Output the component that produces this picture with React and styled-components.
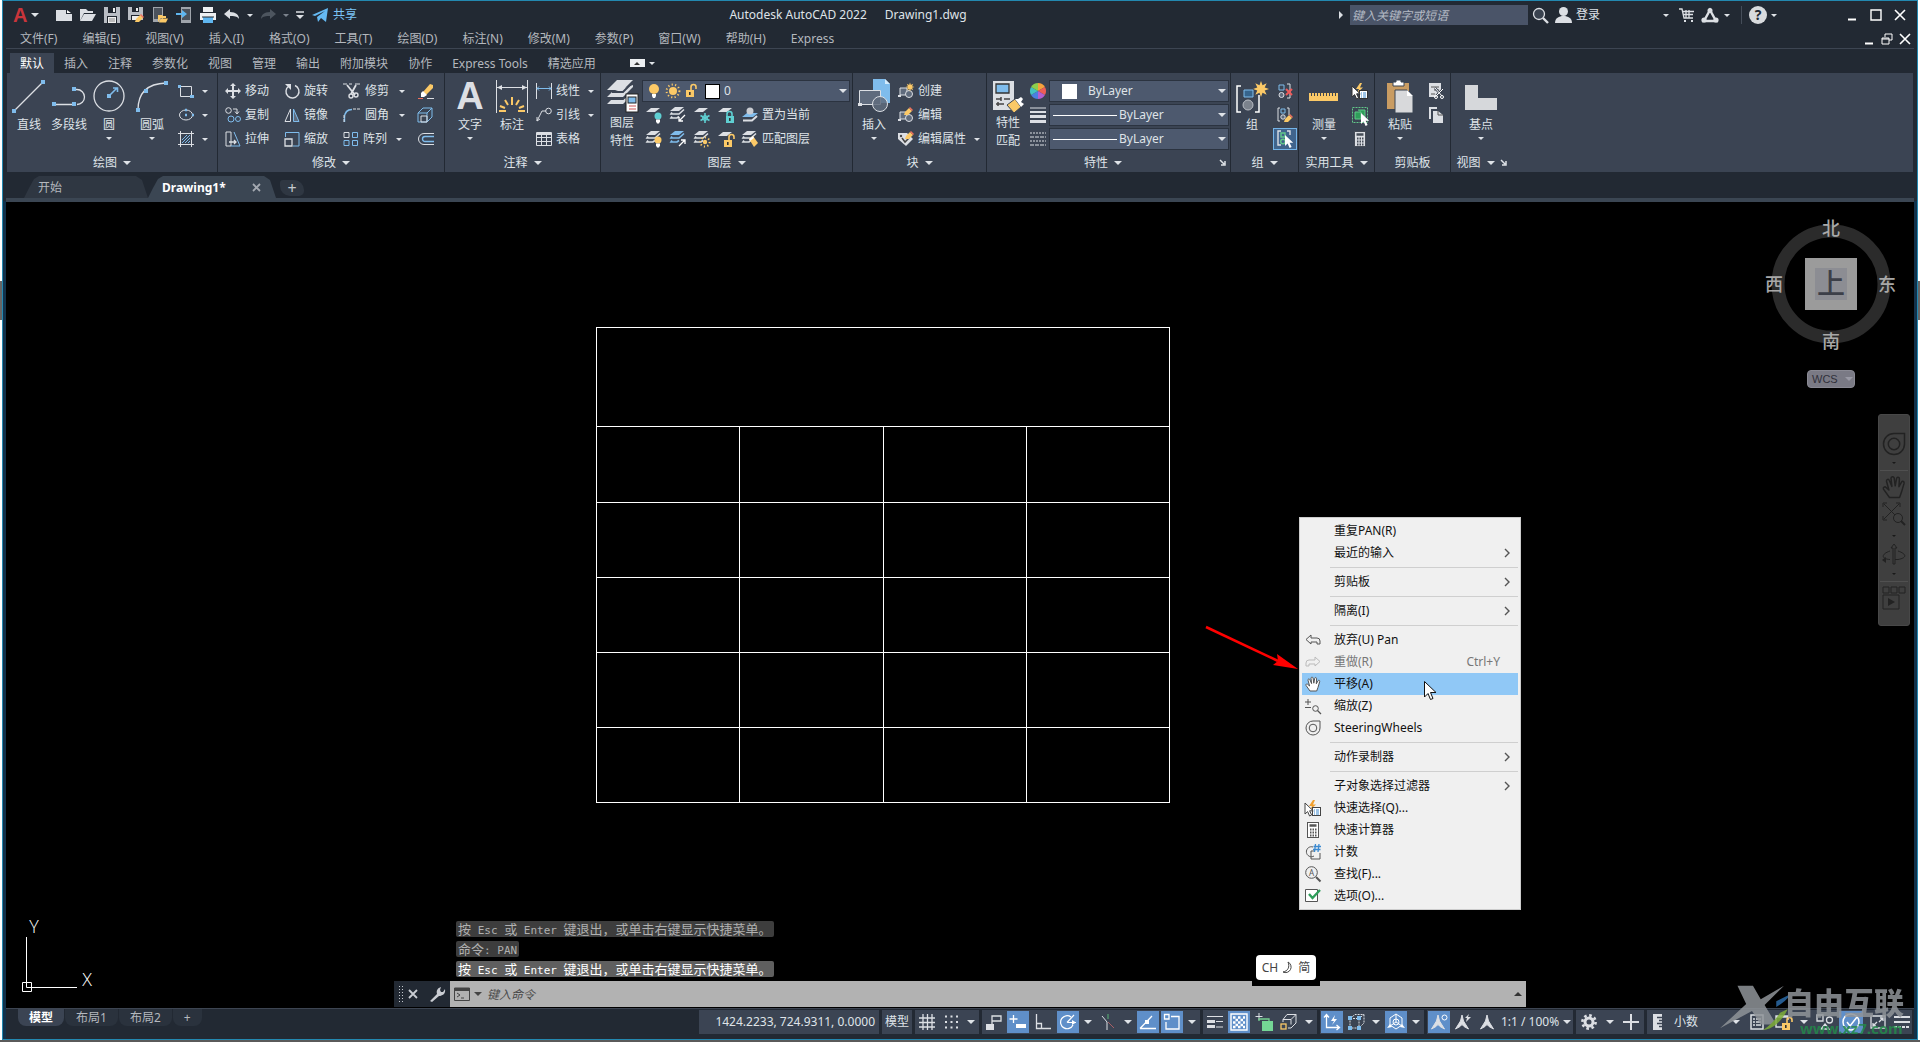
import React from 'react';
import styled, { createGlobalStyle } from 'styled-components';

const light = '#dcdfe4';
const blue = '#7fbcec';
const amber = '#fbc967';
const teal = '#5fcfd2';
const green = '#62c88a';
const grey = '#5f6b7d';
const ink = '#555';

const GlobalStyle = createGlobalStyle`
  * {
    box-sizing: border-box;
  }
  body {
    margin: 0;
    overflow: hidden;
    background: linear-gradient(#fff 281px, #666 281px, #666 320px, #fff 320px);
    font-family: 'Noto Sans', 'Noto Sans CJK SC', sans-serif;
    font-size: 12px;
    line-height: 18px;
    color: #dfe3e8;
  }
  button, input, select {
    font: inherit;
    color: inherit;
  }
`;

/* ---------- icons ---------- */

const sheet = (y, fill = light) => <path d={`M5 ${y}H14L9 ${y + 4}H0Z`} fill={fill} />;
const stack = (fill = light) => (
  <>
    <path d="M5 0H14L9 4H0Z" fill={fill} />
    <path d="M2 5.500L1 7H9L14 2.500M2 9.500L1 11H7L9 9.500" fill="none" stroke={fill} strokeWidth="1.600" />
  </>
);
const dot = (x, y) => <rect x={x - 2} y={y - 2} width="4" height="4" fill={blue} key={`${x}-${y}`} />;
const pencil = (x, y) => (
  <g transform={`translate(${x} ${y})`}>
    <path d="M0 8L1 5L5 1L8 4L4 8Z" fill={amber} />
    <path d="M5 1L6 0L9 3L8 4Z" fill="#f0705e" />
  </g>
);
const star = (x, y, r) => (
  <path
    fill={amber}
    d={Array.from({ length: 16 }, (_, i) => {
      const a = (i * Math.PI) / 8;
      const d = i % 2 ? r / 2 : r;
      return `${i ? 'L' : 'M'}${(x + d * Math.cos(a)).toFixed(2)} ${(y + d * Math.sin(a)).toFixed(2)}`;
    }).join('') + 'Z'}
  />
);
const bulb = (x, y, r, fill) => (
  <>
    <circle cx={x} cy={y} r={r} fill={fill} />
    <path d={`M${x - 2} ${y + r}h4v2l-1 2h-2l-1-2z`} fill="#fff" />
  </>
);
const sun = (x, y, r, fill = amber) => (
  <>
    <circle cx={x} cy={y} r={r} fill={fill} />
    <circle cx={x} cy={y} r={r + 2.4} fill="none" stroke={fill} strokeWidth="2" strokeDasharray="1.2 2.3" />
  </>
);
const padlock = (x, y, fill, open) => (
  <>
    <path d={open ? `M${x + 5} ${y}v-3a2.5 2.5 0 0 1 5 0v2` : `M${x + 1} ${y}v-2a2.5 2.5 0 0 1 5 0v2`} fill="none" stroke={fill} strokeWidth="1.6" />
    <rect x={x} y={y} width="8" height="7" fill={fill} />
    <rect x={x + 3} y={y + 2} width="1.6" height="3" fill="#333" />
  </>
);
const pointer = (x, y, fill = '#fff', stroke = 'none') => (
  <path d={`M${x} ${y}v11l2.6-2.4 2 4.4 2-1-2-4.2h3.6z`} fill={fill} stroke={stroke} />
);
const cube = (c) => <path d="M1 6H10V15H1ZM1 6L6 1H15L10 6M15 1V10L10 15" fill="none" stroke={c} />;
const hand = (stroke, fill = 'none') => (
  <path
    d="M5 15L1 9.4C.4 8.2 2 7.4 2.8 8.4L4.6 10 3 4.2C2.8 2.8 4.4 2.4 4.9 3.7L6.6 7.6 6 2.2C6 .9 7.8.7 8.1 2L8.8 7.2 9.7 2.4C10 1.1 11.7 1.4 11.6 2.7L11.3 7.8 13 4.8C13.7 3.7 15 4.3 14.7 5.6L13 11.4 11.7 15Z"
    fill={fill}
    stroke={stroke}
    strokeLinejoin="round"
  />
);
const wheel = (c) => (
  <>
    <path d="M8 1H15V8A7 7 0 1 1 8 1Z" fill="none" stroke={c} />
    <circle cx="8" cy="8" r="3.8" fill="none" stroke={c} />
  </>
);
const compass = (extra) => (
  <>
    <path d="M8 1L9.5 7 14.500 15 10 12.5 8 10.5 6 12.5 1.500 15 6.5 7Z" fill={light} stroke={light} strokeLinejoin="round" />
    {extra}
  </>
);
const calc = (bg, fg) => (
  <>
    <rect x="2.5" y=".5" width="11" height="15" fill={bg} stroke={fg} />
    <path d="M4.500 3.500h7" stroke={fg} strokeWidth="2.500" />
    <path d="M5 7.500h7M5 10.500h7M5 13.500h7" stroke={fg} strokeWidth="2" strokeDasharray="1.500 1" />
  </>
);
const blockArt = (
  <>
    <path d="M2 5H9V12H2Z" fill={grey} stroke={light} />
    <circle cx="11" cy="11" r="3.500" fill={grey} stroke={light} />
    <rect x="0" y="12" width="3" height="2" fill={light} />
  </>
);
const quickSelect = (bolt, frame) => (
  <>
    <path d="M8 0L4 6H7L5 10L11 4.500H8L10 0Z" fill={bolt} />
    <rect x="7.500" y="7.500" width="8" height="8" fill="#fff" stroke={frame} />
    <path d="M9 10h1M11 10h3M9 12h1M11 12h3M9 14h1M11 14h3" stroke="#3c8ad0" />
    {pointer(0, 3, '#fff', frame)}
  </>
);

const art = {
  logo: [18, 18, <text x="3" y="16" fontFamily="Liberation Sans, sans-serif" fontSize="20" fontWeight="700" fill="#c9353b">A</text>],
  new: [16, 14, <><path d="M0 2H10V6H16V13H0Z" fill={light} /><path d="M11 2L15 5H11Z" fill="#fff" /></>],
  open: [16, 14, <><path d="M0 13V1H6L8 3H13V5H4Z" fill={light} /><path d="M4 6H16L12 13H0Z" fill={light} /></>],
  save: [16, 16, <><path d="M0 0H16V16H0Z" fill="#b9bdc4" /><path d="M4 0H12V6H4ZM3 9H13V16H3Z" fill="#20262f" /><path d="M9 1h2v4H9zM4 10h8v6H4z" fill="#eee" /><path d="M5 12h6M5 14h6" stroke="#888" /></>],
  saveas: [16, 16, <><path d="M0 0H15V13H0Z" fill="#b9bdc4" /><path d="M4 0H11V5H4ZM3 8H12V13H3Z" fill="#20262f" /><path d="M8 1h2v3H8zM4 9h7v4H4z" fill="#eee" />{pencil(7, 7)}</>],
  phone: [16, 16, <><rect x="1" y="0" width="10" height="15" fill="#9fa4ab" /><rect x="2" y="1" width="8" height="11" fill="#4b525c" /><path d="M6 8h4l1 1h3v2h-5l-3 4z" fill={amber} /><path d="M9 11.500H16L14 15.500H7Z" fill={amber} /></>],
  phoneIn: [16, 16, <><rect x="5" y="0" width="10" height="16" fill="#9fa4ab" /><rect x="6" y="2" width="8" height="11" fill="#4b525c" /><path d="M0 6H6V3L11 7 6 11V8H0Z" fill="#5fb6f0" /></>],
  print: [16, 16, <><path d="M3 0H13V5H3ZM0 6H16V13H0Z" fill="#eef0f2" /><path d="M3 10H13V16H3Z" fill="#5fb6f0" /><path d="M2 10H14" stroke="#20262f" /></>],
  undo: [16, 12, <path d="M0 5L6 0V3C12 3 15 6 15 10C13 7 10 7 6 7V10Z" fill={light} />],
  redo: [16, 12, <path d="M16 5L10 0V3C4 3 1 6 1 10C3 7 6 7 10 7V10Z" fill="#4d555f" />],
  custom: [10, 8, <><path d="M1 1h8" stroke={light} strokeWidth="1.500" /><path d="M1 4H9L5 8Z" fill={light} /></>],
  share: [16, 15, <path d="M0 7L16 0 14 14 9 10 6 14 5 9 13 3 3 8Z" fill="#65b9f2" />],
  search: [17, 17, <><circle cx="7" cy="7" r="5.500" fill="#39424f" stroke={light} strokeWidth="1.300" /><path d="M11 11L16 16" stroke={light} strokeWidth="2.400" /></>],
  user: [17, 16, <><circle cx="8.500" cy="4.500" r="4.500" fill={light} /><path d="M0 16C0 11 4 9 8.500 9S17 11 17 16Z" fill={light} /></>],
  cart: [16, 15, <><path d="M0 1H3L5 10H14M4 3.500H15M4.500 6.500H14M10 2V10M7 2V10" fill="none" stroke={light} strokeWidth="1.300" /><path d="M5 13h2M12 13h2" stroke={light} strokeWidth="2" /></>],
  autodesk: [18, 15, <><path d="M9 2L15 13H3Z" fill="none" stroke={light} strokeWidth="2.400" /><circle cx="3" cy="12" r="2.600" fill={light} /><circle cx="15" cy="12" r="2.600" fill={light} /><circle cx="9" cy="2.500" r="2.500" fill={light} /></>],
  min: [12, 12, <path d="M2 10.500h8" stroke="#fff" strokeWidth="2" />],
  max: [12, 12, <path d="M1 1H11V11H1Z" fill="none" stroke="#fff" strokeWidth="1.400" />],
  close: [12, 12, <path d="M1 1L11 11M11 1L1 11" stroke="#fff" strokeWidth="1.600" />],
  restore: [12, 12, <path d="M4 4V1H11V7H8M1 5H8V11H1ZM1 6H8" fill="none" stroke="#fff" />],

  line: [34, 34, <><path d="M2 32L31 3" stroke={light} strokeWidth="1.300" />{dot(2, 32)}{dot(31, 3)}</>],
  polyline: [34, 34, <><path d="M2 25.500H22M22 10.500h3a7.500 7.500 0 0 1 0 15" fill="none" stroke={light} strokeWidth="1.300" />{dot(2, 25)}{dot(22, 25)}{dot(22, 10)}</>],
  circle: [34, 34, <><circle cx="17" cy="17" r="15" fill="none" stroke={light} strokeWidth="1.300" />{dot(17, 17)}<path d="M17 17L25 9M21 9H25.500V13" fill="none" stroke={blue} strokeWidth="1.600" /></>],
  arc: [34, 34, <><path d="M3 31Q3 5 31 4" fill="none" stroke={light} strokeWidth="1.300" />{dot(3, 31)}{dot(11, 12)}{dot(31, 4)}</>],
  rect: [16, 16, <><path d="M2.500 3.500H13.500V13.500H2.500Z" fill="none" stroke={light} /><rect x="0" y="2" width="3" height="3" fill={blue} /><rect x="12" y="12" width="4" height="3" fill={blue} /></>],
  ellipse: [16, 16, <><ellipse cx="8" cy="8" rx="6.500" ry="5" fill="none" stroke={light} /><path d="M7 8h2M7 3h2M14 8h2" stroke={blue} strokeWidth="2.500" /></>],
  hatch: [16, 16, <><path d="M0 2.500H16M0 13.500H16M2.500 0V16M13.500 0V16" stroke={light} /><path d="M4 9L9 4M4 12L12 4M7 12L12 7M10 12l2-2" stroke={blue} /></>],
  move: [16, 16, <path d="M8 0L11 3H9V7H13V5L16 8 13 11V9H9V13H11L8 16 5 13H7V9H3V11L0 8 3 5V7H7V3H5Z" fill={light} />],
  rotate: [16, 16, <><path d="M5 3A6.500 6.500 0 1 0 11 2.500" fill="none" stroke={light} strokeWidth="1.400" /><path d="M1 1H7V7Z" fill={light} /></>],
  trim: [18, 16, <><path d="M0 1H4M6 1h3M12 1h5" stroke={light} /><path d="M4 2L12 12M13 2L8 11" stroke={light} strokeWidth="1.800" /><circle cx="8" cy="13" r="2" fill="none" stroke={light} strokeWidth="1.400" /><circle cx="13" cy="12" r="2" fill="none" stroke={light} strokeWidth="1.400" /></>],
  erase: [18, 16, <><path d="M6 9L13 1L16 2V5L9 12Z" fill={amber} /><path d="M4 10L6 8L10 12L7 14H4Z" fill="#fff" /><path d="M1 15.500H6" stroke="#f0705e" /><path d="M10 15.500H17" stroke={light} /></>],
  copy: [16, 16, <><circle cx="3.500" cy="3.500" r="2.800" fill="none" stroke={light} /><circle cx="6" cy="12" r="3" fill="none" stroke={blue} /><circle cx="13" cy="12" r="2.500" fill="none" stroke={blue} /><path d="M8 2H12V6M10 4.500L12 7 14 4.500" fill="none" stroke={light} /></>],
  mirror: [16, 16, <><path d="M6.500 2V14.500H1Z" fill="none" stroke={light} /><path d="M9.500 2V14.500H15Z" fill={grey} stroke={blue} /></>],
  fillet: [18, 16, <><path d="M1.500 15V11C1.500 5 5 2.500 9 2.500" fill="none" stroke={blue} strokeWidth="1.400" /><path d="M10 2H17M1 8V15" stroke={light} strokeDasharray="3 1" /></>],
  explode: [18, 16, <>{cube(blue)}<path d="M4 9H10V15H4Z" fill="none" stroke={light} /></>],
  stretch: [16, 16, <><path d="M1 1H6V15H1Z" fill="none" stroke={light} /><path d="M9 1L15 15H6" fill="none" stroke={blue} /><path d="M4 11H11M9 9L11 11 9 13" fill="none" stroke={light} strokeWidth="1.300" /></>],
  scale: [16, 16, <><path d="M1.500 6V1.500H15V15H9" fill="none" stroke={blue} /><path d="M1 8H8V15H1Z" fill="none" stroke={light} strokeWidth="1.300" /></>],
  array: [16, 16, <><path d="M1 1.500H6V6.500H1Z" fill="none" stroke={light} /><path d="M9.500 1.500H14.500V6.500H9.500ZM1 9.500H6V14.500H1ZM9.500 9.500H14.500V14.500H9.500Z" fill="none" stroke={blue} /></>],
  offset: [18, 16, <><path d="M17 2.500H7a5.500 5.500 0 0 0 0 11H17" fill="none" stroke={light} /><path d="M17 5.500H8a2.500 2.500 0 0 0 0 5H17" fill="none" stroke={blue} strokeWidth="1.400" /></>],

  text: [34, 34, <text x="17" y="30" textAnchor="middle" fontFamily="Liberation Sans, sans-serif" fontSize="38" fontWeight="700" fill={light}>A</text>],
  dim: [34, 34, <><path d="M1.500 1V34M32.500 1V34M2 8.500H32" stroke={light} /><path d="M2 8.500L7 6V11ZM32 8.500L27 6V11Z" fill={light} /><path d="M17 18V26M10 21l3 5M24 21l-3 5M5 27l5 2M29 27l-5 2M4 32h7M23 32h7" stroke={amber} strokeWidth="2" /></>],
  linear: [16, 16, <><path d="M.5 0V16M15.500 0V16" stroke={light} /><path d="M1 5.500H15M3 3.500L1 5.500 3 7.500M13 3.500L15 5.500 13 7.500" fill="none" stroke={blue} /></>],
  leader: [16, 16, <><circle cx="12.500" cy="4" r="2.800" fill="none" stroke={light} /><path d="M10 4H6L1 14M1 10V14L4 12" fill="none" stroke={light} /></>],
  table: [16, 16, <><path d="M.5 1.500H15.500V14.500H.5ZM.5 6.500H15.500M.5 10.500H15.500M5.500 4V14M10.500 4V14" fill="none" stroke={light} /><path d="M0 3H16" stroke={light} strokeWidth="2" /></>],

  layers: [34, 34, <>
    <path d="M12 1H28L18 11H2Z" fill={light} />
    <path d="M7 13L2 18H18L28 8V6M7 20L2 25H18L24 19" fill={light} />
    <path d="M7 13L18 13L28 3" fill="none" stroke="#3b4453" strokeWidth="2" />
    <path d="M5 20H18L28 10" fill="none" stroke="#3b4453" strokeWidth="2" />
    <rect x="21" y="15" width="12" height="18" fill="#fff" stroke="#222" />
    <rect x="23" y="18" width="8" height="6" fill={blue} stroke="#222" />
    <path d="M24 27h7M24 30h7" stroke="#c55" /></>],
  bulb: [14, 16, bulb(7, 6, 5, amber)],
  sun: [16, 16, sun(8, 8, 4)],
  unlock: [16, 16, padlock(1, 7, amber, true)],
  layOff: [16, 16, <>{sheet(1)}{bulb(12, 9, 3.500, teal)}</>],
  layIso: [16, 16, <>{stack()}<path d="M15 8L9 14M9 10V14H13" fill="none" stroke="#fff" strokeWidth="1.300" /></>],
  layFreeze: [16, 16, <>{sheet(1)}<path d="M11 6V16M6.500 8.500L15.500 13.500M15.500 8.500L6.500 13.500" stroke={teal} strokeWidth="1.600" /><circle cx="11" cy="11" r="2.500" fill="none" stroke={teal} /></>],
  layLock: [16, 16, <>{sheet(1)}{padlock(8, 9, teal)}</>],
  layCurrent: [16, 16, <><path d="M5 6H16L11 10H0Z" fill={blue} /><path d="M1 13.500H10L15 9" fill="none" stroke={light} strokeWidth="2" /><circle cx="8" cy="4" r="3.500" fill="#c9ccd2" /></>],
  layOn: [16, 16, <>{stack()}{bulb(12, 9, 3.500, amber)}</>],
  layUniso: [16, 16, <>{stack(blue)}<path d="M9 15L15 9M11 9H15V13" fill="none" stroke="#fff" strokeWidth="1.300" /></>],
  layThaw: [16, 16, <>{stack()}{sun(11, 11, 2.200)}</>],
  layUnlock: [16, 16, <>{sheet(1)}{padlock(6, 9, amber, true)}</>],
  layMatch: [16, 16, <>{stack()}<path d="M7 8L11 5 16 12 12 16Z" fill={amber} /><path d="M7 8L11 5 12 7 8 10Z" fill="#fff" /></>],

  insert: [34, 34, <>
    <path d="M16 0H28L33 5V24H16Z" fill={blue} />
    <path d="M28 0V5H33Z" fill="#d5ebfb" />
    <path d="M2.500 11.500H23.500V25.500H2.500Z" fill={grey} stroke={light} />
    <circle cx="23" cy="25" r="7.500" fill={grey} fillOpacity=".85" stroke={light} />
    <rect x="1" y="24" width="4" height="3" fill={light} /></>],
  create: [16, 16, <>{blockArt}{star(12, 4, 4.500)}</>],
  editBlock: [16, 16, <>{blockArt}{pencil(6, 0)}</>],
  editAttr: [16, 16, <><path d="M0 2H9L15 8 8 15 0 8Z" fill={light} /><path d="M4 7L7 11 11 7" fill="none" stroke="#444" strokeWidth="1.500" /><circle cx="3" cy="5" r="1.200" fill="#444" />{pencil(7, 0)}</>],

  match: [34, 34, <>
    <path d="M2 2H23V31H2Z" fill={light} />
    <path d="M5 5H18V14H5Z" fill={blue} stroke="#333" strokeWidth="1.300" />
    <path d="M5 20h5M13 20h6M5 25h8M10 18v4M7 23v4" stroke="#444" strokeWidth="1.500" />
    <path d="M16 26L24 20 30 28 23 34Z" fill={amber} stroke="#3b4453" />
    <path d="M24 20L30 28 33 25 30 23 32 20 30 18 27 20Z" fill="#fff" /></>],
  wheelColor: [16, 16, <>
    {['#f6a23c', '#ee5e56', '#b45fd0', '#4a7fe0', '#44c2c0', '#8dcf4c'].map((c, i) => (
      <path key={c} d="M8 8L8 0A8 8 0 0 1 14.930 4Z" fill={c} transform={`rotate(${i * 60} 8 8)`} />
    ))}</>],
  weight: [16, 16, <><path d="M0 1h16" stroke={light} /><path d="M0 5h16" stroke={light} strokeWidth="2" /><path d="M0 9.500h16" stroke={light} strokeWidth="3" /><path d="M0 14.500h16" stroke={light} strokeWidth="3" /></>],
  ltype: [16, 16, <><path d="M0 2h16M0 10h16" stroke={light} strokeDasharray="2 1" /><path d="M0 6h16M0 14h16" stroke={light} strokeDasharray="4 1" /></>],

  group: [34, 34, <>
    <path d="M6 7H2V33H6M20 33H24V16" fill="none" stroke="#fff" strokeWidth="1.500" />
    <path d="M9 11H18V18H9Z" fill="#36648c" stroke={blue} />
    <circle cx="13" cy="26" r="5" fill="#7b828c" stroke="#b9bdc4" />
    {star(26, 10, 8)}</>],
  ungroup: [16, 16, <><path d="M2 2H7V7H2Z" fill="none" stroke={blue} /><circle cx="4.500" cy="12" r="2.500" fill={grey} stroke={light} /><path d="M10 1H13V15H10" fill="none" stroke={light} /><path d="M9 6L15 12M15 6L9 12" stroke="#ee5a5a" strokeWidth="2" /></>],
  groupEdit: [16, 16, <><path d="M3 1H1V14H3M10 1H12V8" fill="none" stroke={light} /><path d="M4 2H8V6H4Z" fill="none" stroke={blue} /><circle cx="6" cy="10" r="2.200" fill={grey} stroke={light} />{pencil(7, 7)}</>],
  groupSel: [18, 18, <><path d="M5 1H2V15H5M11 1H14V5" fill="none" stroke={light} strokeWidth="1.400" /><path d="M5 3H9V7H5Z" fill="none" stroke={green} strokeWidth="1.400" /><circle cx="7" cy="11.500" r="2.300" fill="none" stroke={green} strokeWidth="1.400" />{pointer(9, 5)}</>],

  ruler: [34, 34, <><rect x="2" y="14" width="29" height="8" fill={amber} /><path d="M4 15.500H31" stroke="#3b4453" strokeWidth="3" strokeDasharray="1 2" /></>],
  quick: [16, 16, quickSelect(amber, '#333')],
  selectAll: [16, 16, <><path d="M.5 .5H15.500V15.500H.5Z" fill="none" stroke={green} strokeDasharray="2 1" /><path d="M3 5h6v7H3zM6 3h7v7" fill="#2f9e5a" stroke={green} />{pointer(9, 6)}</>],
  calc: [16, 16, calc(light, '#454c57')],
  paste: [34, 34, <>
    <path d="M4 4H26V30H4Z" fill="#c99c62" />
    <path d="M10 3H13V1H18V3H21V7H10Z" fill="#fff" stroke="#3b4453" />
    <path d="M12 11H24L30 17V34H12Z" fill="#d8d9db" stroke="#3b4453" />
    <path d="M24 11V17H30Z" fill="#fff" /></>],
  cut: [16, 16, <><path d="M1 0H13V8L9 14H1Z" fill={light} /><path d="M3 4h8M6 7h5M3 11h4" stroke="#555" /><path d="M7 5L14 13M15 6L8 13" stroke="#3b4453" strokeWidth="2.400" /><path d="M7 5L14 13M15 6L8 13" stroke="#fff" /><circle cx="8" cy="14" r="1.500" fill="none" stroke="#fff" /><circle cx="14" cy="14" r="1.500" fill="none" stroke="#fff" /></>],
  copyClip: [16, 16, <><path d="M1 0H9V2H3V12H1Z" fill={light} /><path d="M5 4H10L15 8V16H5Z" fill={light} /><path d="M10 4V8H15" fill="none" stroke="#555" /></>],
  base: [34, 34, <path d="M1 6H14V19H33V31H1Z" fill="#d6d8db" />],

  undoLine: [16, 12, <path d="M1 5.500L6 1V4H12Q15 4 15 7V10H12V8H6V10Z" fill="none" stroke={ink} />],
  redoLine: [16, 12, <path d="M15 5.500L10 1V4H4Q1 4 1 7V10H4V8H10V10Z" fill="none" stroke="#bbb" />],
  pan: [16, 16, hand(ink, '#fff')],
  zoomMenu: [16, 16, <><path d="M0 4H6M3 1V7M0 9.500H6" stroke={ink} /><circle cx="10.500" cy="10.500" r="2.800" fill="none" stroke={ink} /><path d="M12.500 12.500L16 16" stroke={ink} strokeWidth="1.300" /></>],
  wheelMenu: [16, 16, wheel(ink)],
  quickMenu: [16, 16, quickSelect('#f0a030', '#444')],
  calcMenu: [16, 16, calc('#fff', ink)],
  count: [16, 16, <><path d="M8 3A5 5 0 1 0 9 12M6 7H10M6 7V15H15V9" fill="none" stroke={ink} /><path d="M10.500 0L9.500 8M14 0L13 8M8.500 2.500H16M8 5.500H15.500" stroke="#3c8ad0" strokeWidth="1.300" /></>],
  find: [16, 16, <><circle cx="6.500" cy="6.500" r="5.800" fill="none" stroke={ink} /><text x="6.500" y="9.500" textAnchor="middle" fontSize="8" fill={ink}>A</text><path d="M11 11L15.500 15.500" stroke={ink} strokeWidth="2" /></>],
  options: [16, 16, <><path d="M.5 1.500H12.500V13.500H.5Z" fill="#fff" stroke={ink} /><path d="M4 6L7.500 10 15 2" fill="none" stroke="#2e9e5a" strokeWidth="2.400" /></>],
  chevron: [8, 10, <path d="M2 1L6 5 2 9" fill="none" stroke={ink} strokeWidth="1.400" />],

  wheelNav: [24, 24, <g transform="scale(1.500)">{wheel('#222')}</g>],
  handNav: [24, 24, <g transform="scale(1.500)">{hand('#222')}</g>],
  zoomNav: [24, 24, <><path d="M2 2L17 17M17 2L2 17M1 5V1H5M14 1H18V5M1 14V18H5" fill="none" stroke="#222" /><circle cx="16" cy="16" r="4.500" fill="#3f3f3f" stroke="#222" /><path d="M19 19L23 23" stroke="#222" strokeWidth="2" /></>],
  orbitNav: [24, 24, <><path d="M12 1L15 5H13V21H11V5H9ZM8 8C-1 11-1 16 8 16.500M16 8C25 11 25 15 16 16.500H13" fill="none" stroke="#222" /><path d="M4 14V20L0 17Z" fill="#222" /></>],
  motionNav: [24, 24, <><path d="M1 1H7V7H1ZM9 1H15V7H9ZM17 1H23V7H17ZM1 9H17V23H1Z" fill="none" stroke="#222" /><path d="M6 12V20L13 16Z" fill="#222" /></>],

  wrench: [16, 16, <path d="M1 15L8 8C7 4 9 2 12 1L11 4 12 6 14 6 16 3C17 8 13 10 10 10L3 16Z" fill="#c9ccd2" />],
  prompt: [16, 14, <><path d="M.5 1H15.500V13.500H.5Z" fill="none" stroke="#444" /><path d="M0 2.500H16" stroke="#444" strokeWidth="3" /><path d="M3 6L6 8 3 10M7 11H10" fill="none" stroke="#444" /></>],

  grid: [16, 16, <path d="M4 0V16M8.500 0V16M13 0V16M0 4H16M0 8.500H16M0 13H16" stroke={light} strokeWidth="1.300" />],
  snap: [16, 16, <path d="M2 2.500H16M2 8H16M2 13.500H16" stroke={light} strokeWidth="2" strokeDasharray="2 3.500" />],
  infer: [16, 16, <><path d="M6 10V2H15V7H6" fill="none" stroke={light} strokeWidth="1.300" /><rect x="0" y="10" width="8" height="6" fill={light} /></>],
  dyn: [18, 16, <><path d="M4.500 1V9M.5 5H8.500" stroke="#fff" strokeWidth="1.300" /><rect x="7" y="10" width="10" height="4" fill="#fff" /></>],
  ortho: [16, 16, <path d="M1.500 0V14.500H16M1.500 9.500H6.500V14" fill="none" stroke={light} strokeWidth="1.300" />],
  polar: [18, 18, <><path d="M12 4A6.500 6.500 0 1 0 14 12M8 9.500H17M8 9.500L15 2" fill="none" stroke="#fff" strokeWidth="1.200" /><path d="M17 9.500l-4-2.500v5z" fill="#fff" /></>],
  iso: [16, 16, <><path d="M2 2L7 8V16" fill="none" stroke={light} /><path d="M8 0V5" stroke="#58b477" /><path d="M8 8L14 14" stroke="#a85f66" /></>],
  otrack: [18, 16, <><path d="M1 14.500H17M1 14.500L13 2" stroke="#fff" strokeWidth="1.300" /><rect x="6" y="6" width="4" height="4" fill="#fff" /></>],
  osnap: [18, 18, <><path d="M8 3.500H16V16H3V9" fill="none" stroke="#fff" strokeWidth="1.300" /><path d="M1.500 1.500H6V6H1.500Z" fill="none" stroke="#fff" strokeWidth="1.300" /></>],
  lweight: [16, 14, <><path d="M0 1.500H16M9 6.500H16M9 12H16" stroke={light} /><path d="M0 6.500H8M0 11.500H8" stroke={light} strokeWidth="3" /></>],
  transp: [18, 18, <><path d="M1 1H17V17H1Z" fill="none" stroke="#fff" strokeWidth="1.400" /><path d="M3 4.500H15M3 9.500H15M3 14H15" stroke="#fff" strokeWidth="2.500" strokeDasharray="2.500 2.500" /><path d="M5.500 7H14M5.500 12H14" stroke="#fff" strokeWidth="2.500" strokeDasharray="2.500 2.500" /></>],
  cycle: [18, 18, <><path d="M4 0V7M.5 3.500H7.500" stroke={light} /><path d="M4 8V6H14V8" fill="none" stroke="#74cf90" strokeWidth="1.300" /><rect x="7" y="8" width="11" height="10" fill="#74d695" /></>],
  osnap3d: [18, 18, <><path d="M3 6.500H11V11.500M3 6.500V9M3 6.500L7 1.500H16L11 6.500M16 1.500V10L11 15H8" fill="none" stroke={light} /><rect x="1" y="11" width="5" height="5" fill="none" stroke={amber} strokeWidth="1.300" /></>],
  ducs: [18, 18, <><path d="M3.500 2V14.500H16M1 4.500L3.500 1.500 6 4.500M13.500 12L16.500 14.500 13.500 17" fill="none" stroke="#fff" strokeWidth="1.300" /><path d="M12 2L8 8H11L9 12L14 6H11Z" fill="#fff" /></>],
  filter: [18, 18, <><path d="M3 5.500H12V15H3ZM3 5.500L8 1.500H17L12 5.500M17 1.500V10L12 15" fill="none" stroke={light} strokeDasharray="2 1" />{dot(3, 5)}{dot(12, 5)}{dot(3, 15)}{dot(12, 15)}</>],
  gizmo: [18, 18, <><path d="M9 1L15 5V12L9 16 3 12V5ZM9 1V9L3 13M9 9L15 13" fill="none" stroke="#fff" /><circle cx="9" cy="9" r="3" fill="none" stroke="#fff" /><path d="M0 15l3-4 2 3zM18 15l-3-4-2 3z" fill="#fff" /></>],
  annoVis: [18, 16, compass(<circle cx="14.500" cy="3.500" r="2.500" fill="none" stroke="#fff" />)],
  annoAuto: [18, 16, compass(<path d="M15 0L11 4H13L12 8L17 3H14Z" fill={light} />)],
  anno: [16, 16, compass(null)],
  gear: [16, 16, <><circle cx="8" cy="8" r="4" fill="none" stroke={light} strokeWidth="3" /><circle cx="8" cy="8" r="6.600" fill="none" stroke={light} strokeWidth="2.600" strokeDasharray="2.600 2.580" /></>],
  plus: [16, 16, <path d="M8 0V16M0 8H16" stroke={light} strokeWidth="2" />],
  units: [10, 16, <><path d="M0 0H9V16H0Z" fill={light} /><path d="M4 3.500H9M6 6.500H9M4 9.500H9M6 12.500H9" stroke="#3b4453" strokeWidth="1.500" /></>],
  props: [14, 16, <><path d="M1 1H13V15H1Z" fill="none" stroke={light} strokeWidth="1.500" /><path d="M3 5h2M6 5h5M3 8h2M6 8h5M3 11h2M6 11h5" stroke={light} strokeWidth="1.500" /></>],
  lockUi: [16, 16, <><path d="M13 6V2H1V13H7M1 3H13" fill="none" stroke={light} strokeWidth="1.400" />{padlock(7, 9, amber, true)}</>],
  isolate: [18, 16, <><path d="M1 1H7V7H1ZM9 10L13 15H5Z" fill="none" stroke={light} strokeWidth="1.300" /><circle cx="13.500" cy="6" r="3" fill="none" stroke={light} strokeWidth="1.300" /></>],
  hardware: [18, 18, <><circle cx="9" cy="9" r="8" fill="none" stroke="#fff" strokeWidth="1.500" /><path d="M5 9L8 13 15 4" fill="none" stroke="#fff" strokeWidth="1.500" /></>],
  clean: [16, 14, <path d="M1 1H15V13H1ZM9 7L13 3M10 3H13V6M7 7L3 11M3 8V11H6" fill="none" stroke={light} strokeWidth="1.300" />],
  burger: [16, 14, <><path d="M0 2H16M0 7H16" stroke={light} strokeWidth="2" /><path d="M0 12H16" stroke={light} strokeWidth="2" strokeDasharray="3 1" /></>],
};

const Svg = styled.svg`
  display: block;
  flex: none;
  overflow: visible;
`;

function Icon({ name }) {
  const [w, h, drawing] = art[name];
  return (
    <Svg width={w} height={h} viewBox={`0 0 ${w} ${h}`} aria-hidden="true">
      {drawing}
    </Svg>
  );
}

/* ---------- shared parts ---------- */

const Caret = styled.span`
  flex: none;
  border: ${({ $size }) => $size || 3}px solid transparent;
  border-top-color: ${({ $color }) => $color || '#dfe3e8'};
  border-bottom: 0;
`;

const IconButton = styled.button`
  display: flex;
  flex: none;
  align-items: center;
  justify-content: center;
  width: ${({ $w }) => $w || 24}px;
  height: ${({ $h }) => $h || 24}px;
  padding: 0;
  border: ${({ $on }) => ($on ? '1px solid #74b4e8' : '0')};
  background: ${({ $on }) => ($on ? '#40648c' : 'transparent')};
`;

const Spacer = styled.span`
  flex: none;
  width: ${({ $w }) => $w}px;
`;

/* ---------- frame ---------- */

const Desktop = styled.div`
  display: flex;
  height: 100vh;
  padding: 0 2px;
  border-bottom: 2px solid #5a5a5a;
`;

const Frame = styled.div`
  display: flex;
  flex: 1;
  flex-direction: column;
  min-width: 0;
  padding: 0 3px;
  border: 1px solid #2388b0;
  background: linear-gradient(#222933 200px, #12314a 200px);
`;

const Bar = styled.div`
  display: flex;
  flex: none;
  align-items: center;
  background: #222933;
`;

const TitleBar = styled(Bar)`
  height: 28px;
  padding: 0 2px 0 4px;
`;

const WindowTitle = styled.h1`
  display: flex;
  flex: 1;
  justify-content: center;
  gap: 18px;
  margin: 0;
  font-size: 12px;
  font-weight: 400;
  white-space: pre;
`;

const Share = styled.button`
  display: flex;
  align-items: center;
  gap: 5px;
  padding: 0 4px;
  border: 0;
  background: none;
  color: #7cc4f6;
`;

const SearchInput = styled.input`
  width: 178px;
  height: 20px;
  margin: 0 3px;
  padding: 0 2px;
  border: 0;
  background: #4a5468;
  &::placeholder {
    color: #b4bac4;
    font-style: italic;
  }
`;

const SearchArrow = styled.button`
  width: 12px;
  height: 12px;
  padding: 0;
  border: 0;
  background: linear-gradient(${light}, ${light}) center / 4px 8px no-repeat;
  clip-path: polygon(4px 2px, 8px 6px, 4px 10px);
`;

const Login = styled.button`
  display: flex;
  align-items: center;
  gap: 4px;
  padding: 0 4px;
  border: 0;
  background: none;
`;

const Divider = styled.span`
  width: 1px;
  height: 18px;
  margin: 0 7px;
  background: #454d59;
`;

const Help = styled.button`
  width: 18px;
  height: 18px;
  padding: 0;
  border: 0;
  border-radius: 50%;
  background: #d9dbde;
  color: #222933;
  font-weight: 700;
  font-size: 14px;
  line-height: 18px;
`;

const quickAccess = ['new', 'open', 'save', 'saveas', 'phone', 'phoneIn', 'print', 'undo'];

function Title() {
  return (
    <TitleBar as="header">
      <IconButton $w={18} aria-label="AutoCAD"><Icon name="logo" /></IconButton>
      <IconButton $w={14} aria-label="应用程序菜单"><Caret $size={4} /></IconButton>
      <Spacer $w={10} />
      {quickAccess.map((name) => (
        <IconButton key={name} aria-label={name}><Icon name={name} /></IconButton>
      ))}
      <IconButton $w={12} aria-label="undo list"><Caret /></IconButton>
      <IconButton aria-label="redo"><Icon name="redo" /></IconButton>
      <IconButton $w={12} aria-label="redo list"><Caret $color="#7c838d" /></IconButton>
      <IconButton $w={16} aria-label="customize"><Icon name="custom" /></IconButton>
      <Share><Icon name="share" />共享</Share>
      <WindowTitle>
        <span>Autodesk AutoCAD 2022</span>
        <span>Drawing1.dwg</span>
      </WindowTitle>
      <SearchArrow aria-label="toggle search" />
      <SearchInput placeholder="键入关键字或短语" aria-label="搜索" />
      <IconButton $w={20} aria-label="search"><Icon name="search" /></IconButton>
      <Login><Icon name="user" />登录</Login>
      <Spacer $w={54} />
      <IconButton $w={16} aria-label="login list"><Caret /></IconButton>
      <IconButton $w={26} aria-label="store"><Icon name="cart" /></IconButton>
      <IconButton $w={20} aria-label="autodesk"><Icon name="autodesk" /></IconButton>
      <IconButton $w={14} aria-label="autodesk list"><Caret /></IconButton>
      <Divider />
      <Help>?</Help>
      <IconButton $w={14} aria-label="help list"><Caret /></IconButton>
      <Spacer $w={59} />
      <IconButton aria-label="minimize"><Icon name="min" /></IconButton>
      <IconButton aria-label="maximize"><Icon name="max" /></IconButton>
      <IconButton aria-label="close"><Icon name="close" /></IconButton>
    </TitleBar>
  );
}

const MenuBar = styled(Bar)`
  gap: 25px;
  height: 20px;
  padding-left: 14px;
  border-bottom: 1px solid #3d4552;
`;

const MenuLink = styled.button`
  padding: 0;
  border: 0;
  background: none;
  color: #b4b8be;
  white-space: nowrap;
`;

const MdiButtons = styled.div`
  display: flex;
  margin-left: auto;
`;

const menus = ['文件(F)', '编辑(E)', '视图(V)', '插入(I)', '格式(O)', '工具(T)', '绘图(D)', '标注(N)', '修改(M)', '参数(P)', '窗口(W)', '帮助(H)', 'Express'];

const TabBar = styled(Bar)`
  height: 24px;
  padding: 4px 0 0 4px;
`;

const RibbonTab = styled.button`
  height: 20px;
  padding: 2px 10px 0;
  border: 0;
  background: ${({ $active }) => ($active ? '#3b4453' : 'none')};
  color: ${({ $active }) => ($active ? '#fff' : '#b4b8be')};
  white-space: nowrap;
`;

const Collapse = styled.button`
  display: flex;
  align-items: center;
  justify-content: center;
  width: 15px;
  height: 8px;
  margin: 0 4px 0 24px;
  padding: 0;
  border: 0;
  background: #eceff2;
  ${Caret} {
    transform: rotate(180deg);
  }
`;

const tabs = ['默认', '插入', '注释', '参数化', '视图', '管理', '输出', '附加模块', '协作', 'Express Tools', '精选应用'];

/* ---------- ribbon ---------- */

const RibbonRow = styled.div`
  display: flex;
  flex: none;
  margin: 0 1px;
  background: #3b4453;
`;

const PanelBox = styled.section`
  display: flex;
  flex: none;
  flex-direction: column;
  width: ${({ $w }) => $w}px;
  padding-top: 6px;
  border-right: ${({ $last }) => ($last ? 0 : '1px solid #222933')};
`;

const PanelBody = styled.div`
  display: flex;
  height: 74px;
  padding-left: ${({ $pad }) => $pad || 0}px;
`;

const PanelTitle = styled.h2`
  display: flex;
  align-items: center;
  height: 19px;
  margin: 0;
  font-size: 12px;
  font-weight: 400;
`;

const TitleButton = styled.button`
  display: flex;
  flex: 1;
  align-items: center;
  justify-content: center;
  gap: 6px;
  padding: 0;
  border: 0;
  background: none;
`;

const Launcher = styled.svg`
  width: 8px;
  height: 8px;
  margin-right: 3px;
`;

const Column = styled.div`
  display: grid;
  flex: none;
  grid-auto-rows: 24px;
  align-items: center;
  width: ${({ $w }) => ($w ? `${$w}px` : 'auto')};
`;

const Big = styled.button`
  display: flex;
  flex: none;
  flex-direction: column;
  align-items: center;
  width: ${({ $w }) => $w || 42}px;
  padding: 0;
  border: 0;
  background: none;
  line-height: 18px;
  ${Caret} {
    margin-top: 3px;
  }
`;

const BigLabel = styled.span`
  padding-top: ${({ $tall }) => ($tall ? 1 : 3)}px;
  white-space: pre;
`;

const Small = styled.button`
  display: flex;
  align-items: center;
  gap: 4px;
  height: 24px;
  padding: 0;
  border: 0;
  background: none;
  white-space: nowrap;
  ${Caret} {
    margin-left: ${({ $arrow }) => $arrow || 3}px;
  }
`;

const IconRow = styled.div`
  display: flex;
  align-items: center;
`;

function Panel({ title, width, pad, caret = true, launcher, last, children }) {
  return (
    <PanelBox $w={width} $last={last}>
      <PanelBody $pad={pad}>{children}</PanelBody>
      <PanelTitle>
        <TitleButton>
          {title}
          {caret && <Caret $size={4} />}
        </TitleButton>
        {launcher && (
          <Launcher viewBox="0 0 8 8" aria-hidden="true">
            <path d="M1 1L5 5M6 2V6H2" fill="none" stroke="#dfe3e8" strokeWidth="1.500" />
          </Launcher>
        )}
      </PanelTitle>
    </PanelBox>
  );
}

function BigButton({ icon, label, width, arrow }) {
  return (
    <Big $w={width}>
      <Icon name={icon} />
      <BigLabel $tall={label.includes('\n')}>{label}</BigLabel>
      {arrow && <Caret />}
    </Big>
  );
}

function SmallButton({ icon, label, arrow }) {
  return (
    <Small $arrow={arrow} aria-label={label || icon}>
      <Icon name={icon} />
      {label}
      {arrow && <Caret />}
    </Small>
  );
}

const SelectBox = styled.div`
  display: grid;
  align-items: center;
  width: ${({ $w }) => $w}px;
  height: 22px;
  border: 1px solid #2b3340;
  background: #4d596e;
  > * {
    grid-area: 1 / 1;
  }
  > ${Caret} {
    justify-self: end;
    margin-right: 2px;
    pointer-events: none;
  }
`;

const Select = styled.select`
  width: 100%;
  height: 20px;
  padding: 0 0 0 ${({ $pad }) => $pad}px;
  border: 0;
  background: transparent;
  appearance: none;
`;

const SelectArt = styled.span`
  display: flex;
  align-items: center;
  gap: ${({ $gap }) => $gap || 0}px;
  padding-left: ${({ $pad }) => $pad || 0}px;
  pointer-events: none;
`;

const Swatch = styled.span`
  width: 15px;
  height: 15px;
  border: 1px solid ${({ $edge }) => $edge || '#fff'};
  background: #fff;
`;

const Rule = styled.span`
  width: 64px;
  height: 1px;
  background: #fff;
`;

function LayerSelect() {
  return (
    <SelectBox $w={208}>
      <Select $pad={81} aria-label="图层" defaultValue="0">
        <option>0</option>
      </Select>
      <SelectArt $pad={4} $gap={4}>
        <Icon name="bulb" />
        <Icon name="sun" />
        <Icon name="unlock" />
        <Swatch $edge="#000" />
      </SelectArt>
      <Caret $size={4} />
    </SelectBox>
  );
}

function PropSelect({ label, line }) {
  return (
    <SelectBox $w={180}>
      <Select $pad={line ? 69 : 38} aria-label={label} defaultValue="ByLayer">
        <option>ByLayer</option>
      </Select>
      <SelectArt $pad={line ? 3 : 12}>{line ? <Rule /> : <Swatch />}</SelectArt>
      <Caret $size={4} />
    </SelectBox>
  );
}

function Ribbon() {
  return (
    <RibbonRow>
      <Panel title="绘图" width={211} pad={2}>
        <BigButton icon="line" label="直线" width={40} />
        <BigButton icon="polyline" label="多段线" width={40} />
        <BigButton icon="circle" label="圆" width={40} arrow />
        <BigButton icon="arc" label="圆弧" width={46} arrow />
        <Spacer $w={3} />
        <Column>
          <SmallButton icon="rect" arrow={4} />
          <SmallButton icon="ellipse" arrow={4} />
          <SmallButton icon="hatch" arrow={4} />
        </Column>
      </Panel>
      <Panel title="修改" width={227} pad={7}>
        <Column $w={59}>
          <SmallButton icon="move" label="移动" />
          <SmallButton icon="copy" label="复制" />
          <SmallButton icon="stretch" label="拉伸" />
        </Column>
        <Column $w={59}>
          <SmallButton icon="rotate" label="旋转" />
          <SmallButton icon="mirror" label="镜像" />
          <SmallButton icon="scale" label="缩放" />
        </Column>
        <Column $w={74}>
          <SmallButton icon="trim" label="修剪" arrow={6} />
          <SmallButton icon="fillet" label="圆角" arrow={6} />
          <SmallButton icon="array" label="阵列" arrow={5} />
        </Column>
        <Column>
          <SmallButton icon="erase" />
          <SmallButton icon="explode" />
          <SmallButton icon="offset" />
        </Column>
      </Panel>
      <Panel title="注释" width={156} pad={4}>
        <BigButton icon="text" label="文字" arrow />
        <BigButton icon="dim" label="标注" />
        <Spacer $w={3} />
        <Column>
          <SmallButton icon="linear" label="线性" arrow={4} />
          <SmallButton icon="leader" label="引线" arrow={4} />
          <SmallButton icon="table" label="表格" />
        </Column>
      </Panel>
      <Panel title="图层" width={252} pad={1}>
        <BigButton icon="layers" label={'图层\n特性'} width={40} />
        <Column>
          <LayerSelect />
          <IconRow>
            {['layOff', 'layIso', 'layFreeze', 'layLock'].map((name) => (
              <IconButton key={name} aria-label={name}><Icon name={name} /></IconButton>
            ))}
            <Spacer $w={4} />
            <SmallButton icon="layCurrent" label="置为当前" />
          </IconRow>
          <IconRow>
            {['layOn', 'layUniso', 'layThaw', 'layUnlock'].map((name) => (
              <IconButton key={name} aria-label={name}><Icon name={name} /></IconButton>
            ))}
            <Spacer $w={4} />
            <SmallButton icon="layMatch" label="匹配图层" />
          </IconRow>
        </Column>
      </Panel>
      <Panel title="块" width={134}>
        <BigButton icon="insert" label="插入" arrow />
        <Spacer $w={3} />
        <Column>
          <SmallButton icon="create" label="创建" />
          <SmallButton icon="editBlock" label="编辑" />
          <SmallButton icon="editAttr" label="编辑属性" arrow={4} />
        </Column>
      </Panel>
      <Panel title="特性" width={244} launcher>
        <BigButton icon="match" label={'特性\n匹配'} />
        <Spacer $w={1} />
        <Column $w={19}>
          <SmallButton icon="wheelColor" />
          <SmallButton icon="weight" />
          <SmallButton icon="ltype" />
        </Column>
        <Column>
          <PropSelect label="对象颜色" />
          <PropSelect label="线宽" line />
          <PropSelect label="线型" line />
        </Column>
      </Panel>
      <Panel title="组" width={68}>
        <BigButton icon="group" label="组" />
        <Column>
          <IconButton aria-label="解除编组"><Icon name="ungroup" /></IconButton>
          <IconButton aria-label="组编辑"><Icon name="groupEdit" /></IconButton>
          <IconButton $on $h={22} aria-label="启用组选择"><Icon name="groupSel" /></IconButton>
        </Column>
      </Panel>
      <Panel title="实用工具" width={76} pad={3}>
        <BigButton icon="ruler" label="测量" width={44} arrow />
        <Spacer $w={2} />
        <Column>
          <IconButton aria-label="快速选择"><Icon name="quick" /></IconButton>
          <IconButton aria-label="全部选择"><Icon name="selectAll" /></IconButton>
          <IconButton aria-label="计算器"><Icon name="calc" /></IconButton>
        </Column>
      </Panel>
      <Panel title="剪贴板" width={76} pad={3} caret={false}>
        <BigButton icon="paste" label="粘贴" width={44} arrow />
        <Spacer $w={2} />
        <Column>
          <IconButton aria-label="剪切"><Icon name="cut" /></IconButton>
          <IconButton aria-label="复制剪裁"><Icon name="copyClip" /></IconButton>
        </Column>
      </Panel>
      <Panel title="视图" width={60} pad={8} launcher last>
        <BigButton icon="base" label="基点" width={44} arrow />
      </Panel>
    </RibbonRow>
  );
}

/* ---------- document tabs ---------- */

const FileTabs = styled(Bar)`
  align-items: flex-end;
  height: 30px;
  padding-left: 18px;
  border-bottom: 4px solid #3b4653;
`;

const FileTab = styled.div`
  display: flex;
  align-items: center;
  justify-content: space-between;
  width: ${({ $w }) => $w}px;
  height: 22px;
  padding: 2px 15px 0 14px;
  clip-path: polygon(0 100%, 5px 12px, 10px 3px, 15px 0, calc(100% - 12px) 0, calc(100% - 6px) 4px, 100% 100%);
  background: ${({ $active }) => ($active ? '#3b4653' : '#2f3742')};
  color: ${({ $active }) => ($active ? '#fff' : '#b4b8be')};
  font-weight: ${({ $active }) => ($active ? 700 : 400)};
`;

const PlainButton = styled.button`
  padding: 0;
  border: 0;
  background: none;
`;

const AddTab = styled.button`
  width: 24px;
  height: 16px;
  margin: 0 0 2px 4px;
  padding: 0;
  border: 0;
  border-radius: 3px 10px 5px 10px;
  background: #2f3742;
  color: #c4c8ce;
  font-size: 16px;
  line-height: 14px;
`;

/* ---------- drawing area ---------- */

const Canvas = styled.main`
  position: relative;
  flex: 1;
  min-height: 0;
  overflow: hidden;
  background: #000;
`;

const Drawing = styled.svg`
  position: absolute;
  top: 0;
  left: 0;
  width: 100%;
  height: 100%;
`;

const Ucs = styled.svg`
  position: absolute;
  bottom: 3px;
  left: 12px;
  width: 84px;
  height: 96px;
`;

const ViewCube = styled.svg`
  position: absolute;
  top: 14px;
  right: 14px;
  width: 138px;
  height: 136px;
`;

const Wcs = styled.button`
  position: absolute;
  top: 168px;
  right: 59px;
  display: flex;
  align-items: center;
  gap: 7px;
  width: 48px;
  height: 18px;
  padding: 0 4px;
  border: 1px solid #8a8a94;
  border-radius: 4px;
  background: #7a7a85;
  color: #30303a;
  font-family: 'Liberation Sans', sans-serif;
  font-size: 11px;
`;

const NavBar = styled.nav`
  position: absolute;
  top: 212px;
  right: 4px;
  display: flex;
  flex-direction: column;
  align-items: center;
  width: 32px;
  height: 212px;
  padding-top: 17px;
  border: 1px solid #484848;
  border-radius: 3px;
  background: #3f3f3f;
`;

const NavArrow = styled(IconButton)`
  width: 30px;
  height: 14px;
`;

const NavRule = styled.hr`
  width: 28px;
  height: 1px;
  margin: 0 0 4px;
  border: 0;
  background: #505050;
`;

const CommandBox = styled.div`
  position: absolute;
  bottom: 1px;
  left: 50%;
  width: 1132px;
  max-width: 100%;
  transform: translateX(-50%);
`;

const History = styled.ol`
  display: grid;
  justify-items: start;
  gap: 4px;
  margin: 0 0 4px 62px;
  padding: 0;
  list-style: none;
`;

const HistoryLine = styled.li`
  height: 16px;
  padding: 0 2px;
  border-radius: 2px;
  background: ${({ $fresh }) => ($fresh ? '#5f5f5f' : '#3d3d3d')};
  color: ${({ $fresh }) => ($fresh ? '#fff' : '#b0b0b0')};
  font-size: 13px;
  line-height: 16px;
  white-space: pre;
`;

const Mono = styled.span`
  font-family: 'DejaVu Sans Mono', monospace;
  font-size: 11px;
`;

const CommandRow = styled.div`
  display: flex;
  align-items: center;
  height: 26px;
  background: #b2b2b2;
`;

const CommandGrip = styled.div`
  display: flex;
  align-items: center;
  width: 56px;
  height: 26px;
  background: #222933;
`;

const Dots = styled.span`
  width: 6px;
  height: 18px;
  margin: 0 2px 0 4px;
  background: radial-gradient(#c5c9ce 1px, transparent 1px) 0 0 / 3px 3px;
`;

const CommandInput = styled.input`
  flex: 1;
  min-width: 0;
  height: 24px;
  margin-left: 5px;
  padding: 0;
  border: 0;
  background: none;
  color: #222;
  &::placeholder {
    color: #4a4a4a;
    font-style: italic;
  }
`;

const Expand = styled(IconButton)`
  ${Caret} {
    transform: rotate(180deg);
  }
`;

const Ime = styled.div`
  position: absolute;
  right: 594px;
  bottom: 22px;
  padding: 0 4px 6px;
  background: #000;
`;

const ImeBox = styled.div`
  display: flex;
  align-items: center;
  justify-content: center;
  gap: 4px;
  width: 60px;
  height: 25px;
  border-radius: 4px;
  background: #fff;
  color: #444;
`;

const ContextMenu = styled.ul`
  position: absolute;
  top: 315px;
  left: 1293px;
  width: 222px;
  margin: 0;
  padding: 2px;
  border: 1px solid #ccc;
  background: #f0f0f0;
  color: #111;
  list-style: none;
`;

const MenuItem = styled.button`
  display: grid;
  grid-template-columns: 32px 1fr auto 18px;
  align-items: center;
  width: 100%;
  height: 22px;
  padding: 0;
  border: 0;
  background: ${({ $hot }) => ($hot ? '#90c8f6' : 'none')};
  color: ${({ disabled }) => (disabled ? '#777' : '#111')};
  text-align: left;
`;

const MenuIcon = styled.span`
  padding-left: 3px;
`;

const MenuRule = styled.li`
  height: 1px;
  margin: 3px 0 3px 28px;
  background: #cfcfcf;
`;

const MenuChevron = styled.span`
  padding-left: 3px;
`;

const Cursor = styled.svg`
  position: absolute;
  top: 479px;
  left: 1418px;
  width: 14px;
  height: 22px;
`;

const menuItems = [
  { label: '重复PAN(R)' },
  { label: '最近的输入', more: true },
  null,
  { label: '剪贴板', more: true },
  null,
  { label: '隔离(I)', more: true },
  null,
  { label: '放弃(U) Pan', icon: 'undoLine' },
  { label: '重做(R)', icon: 'redoLine', keys: 'Ctrl+Y', off: true },
  { label: '平移(A)', icon: 'pan', hot: true },
  { label: '缩放(Z)', icon: 'zoomMenu' },
  { label: 'SteeringWheels', icon: 'wheelMenu' },
  null,
  { label: '动作录制器', more: true },
  null,
  { label: '子对象选择过滤器', more: true },
  { label: '快速选择(Q)...', icon: 'quickMenu' },
  { label: '快速计算器', icon: 'calcMenu' },
  { label: '计数', icon: 'count' },
  { label: '查找(F)...', icon: 'find' },
  { label: '选项(O)...', icon: 'options' },
];

function Navigation() {
  return (
    <NavBar aria-label="导航栏">
      <IconButton $w={30} aria-label="steering wheel"><Icon name="wheelNav" /></IconButton>
      <NavArrow aria-label="wheel list"><Caret $size={2} $color="#191919" /></NavArrow>
      <NavRule />
      <IconButton $w={30} aria-label="pan"><Icon name="handNav" /></IconButton>
      <IconButton $w={30} $h={30} aria-label="zoom"><Icon name="zoomNav" /></IconButton>
      <NavArrow aria-label="zoom list"><Caret $size={2} $color="#191919" /></NavArrow>
      <IconButton $w={30} aria-label="orbit"><Icon name="orbitNav" /></IconButton>
      <NavArrow aria-label="orbit list"><Caret $size={2} $color="#191919" /></NavArrow>
      <NavRule />
      <IconButton $w={30} aria-label="show motion"><Icon name="motionNav" /></IconButton>
    </NavBar>
  );
}

const notice = (
  <>
    按<Mono> Esc </Mono>或<Mono> Enter </Mono>键退出，或单击右键显示快捷菜单。
  </>
);

function DrawingArea() {
  return (
    <Canvas>
      <Drawing aria-hidden="true">
        <g fill="none" stroke="#fff" shapeRendering="crispEdges">
          <rect x="590.5" y="125.5" width="573" height="475" />
          {[224.5, 300.5, 375.5, 450.5, 525.5].map((y) => (
            <path key={y} d={`M590.5 ${y}H1163.5`} />
          ))}
          {[733.5, 877.5, 1020.5].map((x) => (
            <path key={x} d={`M${x} 224.5V600.5`} />
          ))}
        </g>
        <path d="M1200 425L1272 459" stroke="#f00" strokeWidth="2.500" />
        <path d="M1292 467L1267 463L1272 459L1271 452Z" fill="#f00" />
      </Drawing>
      <Ucs viewBox="0 0 84 96" aria-hidden="true">
        <path d="M8.500 28V78.500H59M4.500 73.500H13.500V82.500H4.500Z" fill="none" stroke="#fff" />
        <g fill="#fff" fontSize="18" fontWeight="300" fontFamily="Open Sans, sans-serif" textAnchor="middle">
          <text x="16" y="24">Y</text>
          <text x="69" y="77">X</text>
        </g>
      </Ucs>
      <ViewCube viewBox="0 0 138 136">
        <circle cx="69" cy="68" r="53" fill="none" stroke="#2b2b2b" strokeWidth="13" />
        <rect x="43" y="42" width="52" height="52" fill="#9b9b9b" />
        <rect x="53" y="52" width="32" height="32" fill="#8c8d93" />
        <g fontFamily="Noto Sans CJK SC, sans-serif" fontSize="18" fontWeight="500" fill="#a8a8a8" textAnchor="middle">
          <text x="69" y="19">北</text>
          <text x="69" y="132">南</text>
          <text x="12" y="75">西</text>
          <text x="125" y="75">东</text>
          <text x="69" y="78" fontSize="28" fill="#3c3f48">上</text>
        </g>
      </ViewCube>
      <Wcs>WCS<Caret $color="#9a9aa6" $size={4} /></Wcs>
      <Navigation />
      <CommandBox>
        <History>
          <HistoryLine>{notice}</HistoryLine>
          <HistoryLine>命令<Mono>: PAN</Mono></HistoryLine>
          <HistoryLine $fresh>{notice}</HistoryLine>
        </History>
        <CommandRow>
          <CommandGrip>
            <Dots />
            <IconButton $w={14} aria-label="关闭">
              <svg width="10" height="10" aria-hidden="true"><path d="M1 1L9 9M9 1L1 9" stroke="#c9ccd2" strokeWidth="1.800" /></svg>
            </IconButton>
            <Spacer $w={6} />
            <IconButton $w={22} aria-label="自定义"><Icon name="wrench" /></IconButton>
          </CommandGrip>
          <IconButton aria-label="最近使用的命令"><Icon name="prompt" /></IconButton>
          <Caret $size={4} $color="#444" />
          <CommandInput placeholder="键入命令" aria-label="命令" />
          <Expand $w={16} aria-label="展开"><Caret $size={4} $color="#333" /></Expand>
        </CommandRow>
      </CommandBox>
      <Ime>
        <ImeBox>
          <span>CH</span>
          <svg width="12" height="13" aria-hidden="true"><path d="M6 1A5.500 5.500 0 1 1 1 11C6 10 8 6 6 1Z" fill="none" stroke="#444" /></svg>
          <span>简</span>
        </ImeBox>
      </Ime>
      <ContextMenu role="menu">
        {menuItems.map((item, i) =>
          item ? (
            <li key={item.label}>
              <MenuItem role="menuitem" $hot={item.hot} disabled={item.off}>
                <MenuIcon>{item.icon && <Icon name={item.icon} />}</MenuIcon>
                <span>{item.label}</span>
                <span>{item.keys}</span>
                <MenuChevron>{item.more && <Icon name="chevron" />}</MenuChevron>
              </MenuItem>
            </li>
          ) : (
            <MenuRule key={i} role="separator" />
          )
        )}
      </ContextMenu>
      <Cursor viewBox="0 0 14 22" aria-hidden="true">
        <path d="M.5 .5V16L4 12.500L6.500 18.500L9 17.500L6.500 11.500H12Z" fill="#fff" stroke="#111" />
      </Cursor>
    </Canvas>
  );
}

/* ---------- status bar ---------- */

const StatusBar = styled.footer`
  display: flex;
  flex: none;
  align-items: flex-start;
  height: 31px;
  padding: 0 2px 0 12px;
  border-top: 1px solid #3d4552;
  background: #222933;
`;

const LayoutTab = styled.button`
  height: 17px;
  margin-right: 1px;
  padding: 0 11px;
  border: 0;
  border-radius: 0 0 8px 8px;
  background: ${({ $active }) => ($active ? '#3b4453' : '#2a323d')};
  color: ${({ $active }) => ($active ? '#fff' : '#b4b8be')};
  font-weight: ${({ $active }) => ($active ? 700 : 400)};
  line-height: 16px;
`;

const StatusCells = styled.div`
  display: flex;
  gap: 3px;
  margin: 1px 0 0 auto;
`;

const CellGroup = styled.div`
  display: flex;
  background: #3b4453;
`;

const Cell = styled.button`
  display: flex;
  align-items: center;
  justify-content: center;
  width: ${({ $w }) => $w || 24}px;
  height: 24px;
  padding: 0;
  border: 0 solid #3b4453;
  border-width: ${({ $on }) => ($on ? '1px' : 0)};
  background: ${({ $on }) => ($on ? '#5f8fc9' : 'none')};
  white-space: nowrap;
`;

const Coordinates = styled(Cell)`
  justify-content: flex-end;
  padding-right: 4px;
`;

const ARROW = 'arrow';
const statusGroups = [
  [['grid', 24], ['snap', 24], [ARROW, 16]],
  [['infer'], ['dyn', 24, 1], ['ortho', 26], ['polar', 24, 1], [ARROW, 16], ['iso'], [ARROW, 16], ['otrack', 24, 1], ['osnap', 24, 1], [ARROW, 16]],
  [['lweight'], ['transp', 24, 1], ['cycle', 26], ['osnap3d'], [ARROW, 16]],
  [['ducs', 24, 1], ['filter'], [ARROW, 16], ['gizmo', 24, 1], [ARROW, 16]],
  [['annoVis', 24, 1], ['annoAuto'], ['anno'], ['1:1 / 100%', 62], [ARROW, 12]],
  [['gear', 26], [ARROW, 16], ['plus', 26]],
  [['units', 22], ['小数', 34], [null, 25], [ARROW, 16], ['props', 26], ['lockUi', 26], [ARROW, 16], ['isolate', 26], ['hardware', 26, 1], ['clean', 28], ['burger', 20]],
];

const Watermark = styled.div`
  position: fixed;
  right: 6px;
  bottom: 7px;
  display: flex;
  align-items: flex-start;
  width: 194px;
  height: 50px;
  color: #909499;
  opacity: 0.85;
  pointer-events: none;
`;

const WatermarkText = styled.div`
  font-size: 30px;
  font-weight: 900;
  line-height: 36px;
  white-space: nowrap;
`;

const WatermarkUrl = styled.div`
  padding-left: 16px;
  color: #24894a;
  font-size: 15px;
  font-weight: 700;
  line-height: 14px;
`;

function Status() {
  return (
    <StatusBar>
      <LayoutTab $active>模型</LayoutTab>
      <LayoutTab>布局1</LayoutTab>
      <LayoutTab>布局2</LayoutTab>
      <LayoutTab aria-label="新建布局">+</LayoutTab>
      <StatusCells>
        <CellGroup><Coordinates $w={180}>1424.2233, 724.9311, 0.0000</Coordinates></CellGroup>
        <CellGroup><Cell $w={30}>模型</Cell></CellGroup>
        {statusGroups.map((group, g) => (
          <CellGroup key={g}>
            {group.map(([name, width, on], i) =>
              name ? (
                <Cell key={i} $w={width} $on={on}>
                  {name === ARROW ? <Caret $size={4} /> : art[name] ? <Icon name={name} /> : name}
                </Cell>
              ) : (
                <Spacer key={i} $w={width} />
              )
            )}
          </CellGroup>
        ))}
      </StatusCells>
    </StatusBar>
  );
}

export default function App() {
  return (
    <>
      <GlobalStyle />
      <Desktop>
        <Frame>
          <Title />
          <MenuBar as="nav">
            {menus.map((label) => (
              <MenuLink key={label}>{label}</MenuLink>
            ))}
            <MdiButtons>
              {['min', 'restore', 'close'].map((name) => (
                <IconButton key={name} $w={18} $h={18} aria-label={name}><Icon name={name} /></IconButton>
              ))}
            </MdiButtons>
          </MenuBar>
          <TabBar>
            {tabs.map((label, i) => (
              <RibbonTab key={label} $active={i === 0}>{label}</RibbonTab>
            ))}
            <Collapse aria-label="最小化功能区"><Caret $color="#333" /></Collapse>
            <Caret />
          </TabBar>
          <Ribbon />
          <FileTabs>
            <FileTab $w={124}>开始</FileTab>
            <FileTab $w={128} $active>
              Drawing1*
              <PlainButton aria-label="关闭 Drawing1">
                <svg width="9" height="9" aria-hidden="true"><path d="M1 1L8 8M8 1L1 8" stroke="#a4a9b1" strokeWidth="1.800" /></svg>
              </PlainButton>
            </FileTab>
            <AddTab aria-label="新图形">+</AddTab>
          </FileTabs>
          <DrawingArea />
          <Status />
        </Frame>
      </Desktop>
      <Watermark>
        <Svg width="64" height="46" viewBox="0 0 66 46" aria-hidden="true">
          <path d="M18 0H34L42 14L66 0L46 20L58 40H42L33 26L0 44L27 19Z" fill="#909499" />
          <path d="M58 16Q66 12 74 8Q68 16 58 22Z" fill="#2c6ca8" />
          <path d="M44 46Q60 44 70 24L62 28Q54 40 44 46Z" fill="#7fae3a" />
        </Svg>
        <div>
          <WatermarkText>自由互联</WatermarkText>
          <WatermarkUrl>www.xz7.com</WatermarkUrl>
        </div>
      </Watermark>
    </>
  );
}
